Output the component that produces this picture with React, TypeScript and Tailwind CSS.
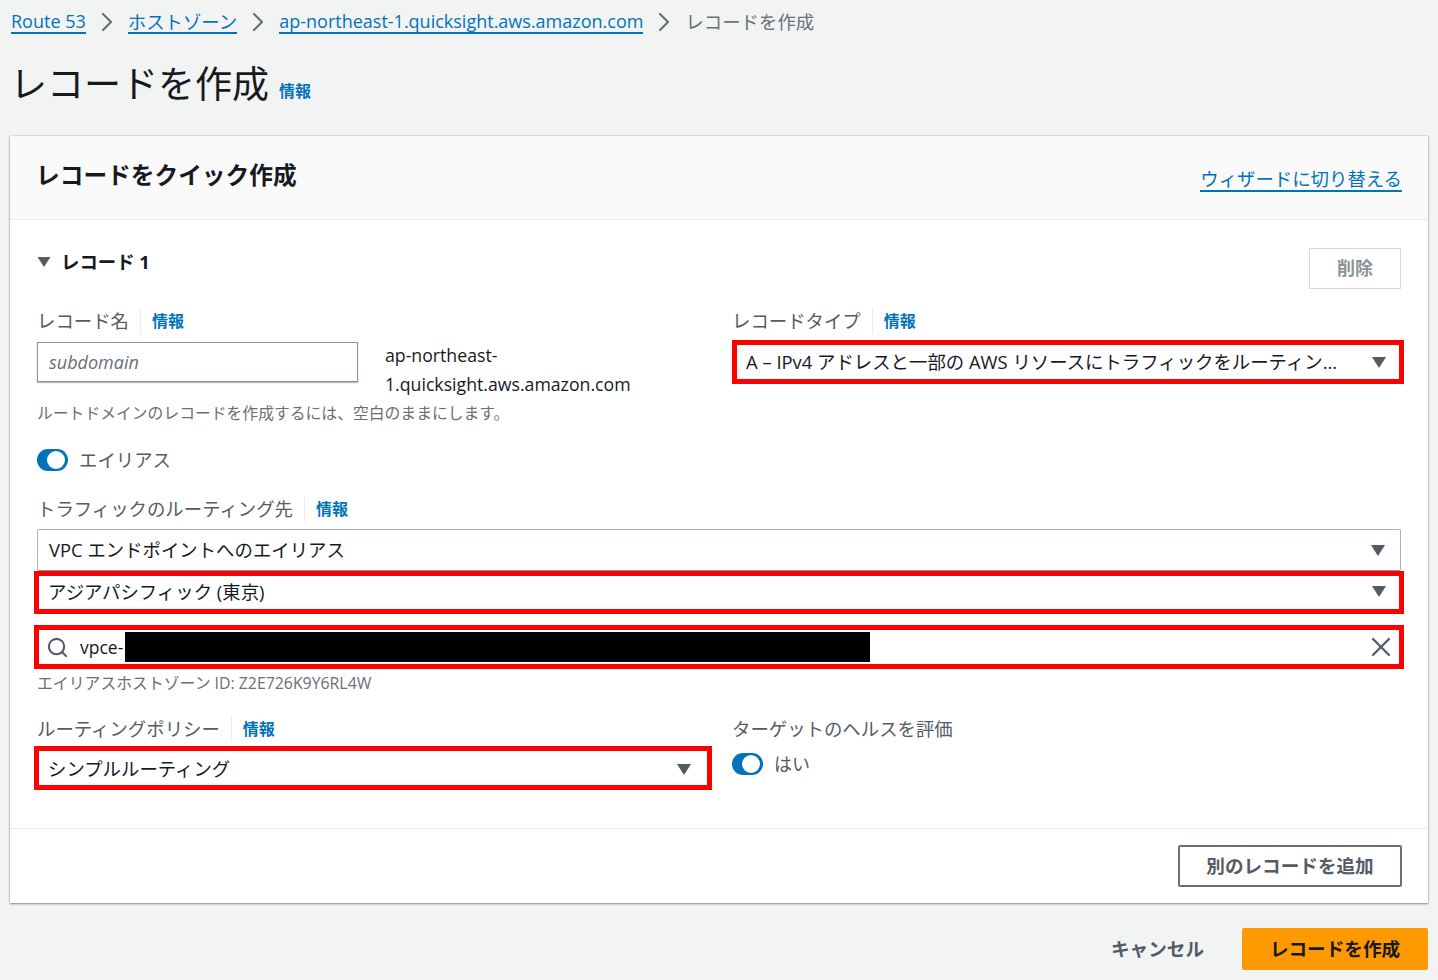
import React from 'react';
import { ChevronRight, Search, X } from 'lucide-react';

const Info = () => <a className="text-[16px] leading-[26px] font-bold text-[#0073bb]">情報</a>;

const FieldLabel = ({ text, className = '' }: { text: string; className?: string }) => (
    <div className={`flex items-center h-[26px] ${className}`}>
        <span className="text-[18.4px] leading-[26px] text-[#545b64]">{text}</span>
        <span className="h-[26px] border-l border-[#eaeded] ml-[11px] mr-[11px]" />
        <Info />
    </div>
);

const Caret = ({ className }: { className: string }) => (
    <svg viewBox="0 0 14 12" className={className}>
        <polygon points="0.5,1 13.5,1 7,11" fill="#545b64" />
    </svg>
);

const Crumb = ({ text, className = '' }: { text: string; className?: string }) => (
    <a className={`text-[#0073bb] border-b-2 border-[#0073bb] leading-[21px] h-[23px] ${className}`}>{text}</a>
);

const Chevron = () => (
    <ChevronRight size={32} strokeWidth={1.6} className="text-[#687078] mx-[5px] -mt-[5px] shrink-0" />
);

const Toggle = () => (
    <div className="w-[31px] h-[22px] rounded-full bg-[#0073bb] flex items-center justify-end pr-[3px]">
        <div className="w-[18px] h-[18px] rounded-full bg-white" />
    </div>
);

const RedSelect = ({ text, className }: { text: string; className: string }) => (
    <div className={`border-[5px] border-[#ff0000] bg-white flex items-center pl-[9px] text-[18.4px] text-[#16191f] ${className}`}>
        <span className="flex-1">{text}</span>
        <Caret className="w-[16px] h-[13px] shrink-0" />
    </div>
);

export default function App() {
    return (
        <div className="w-[1438px] h-[980px] overflow-hidden bg-[#f2f3f3] text-[#16191f] font-['Open_Sans','Noto_Sans_CJK_JP',sans-serif]">
            <nav className="flex items-start pl-[11px] pt-[11px] h-[45px] text-[18px]">
                <Crumb text="Route 53" />
                <Chevron />
                <Crumb text="ホストゾーン" className="text-[18.4px]" />
                <Chevron />
                <Crumb text="ap-northeast-1.quicksight.aws.amazon.com" />
                <Chevron />
                <span className="text-[#687078] text-[18.4px] leading-[21px]">レコードを作成</span>
            </nav>

            <div className="flex items-end pl-[10px] h-[91px] pb-[27px]">
                <h1 className="text-[37px] leading-[50px] text-[#16191f]">レコードを作成</h1>
                <span className="ml-[10px] mb-[5px]"><Info /></span>
            </div>

            <div className="ml-[10px] w-[1418px] h-[767px] bg-white shadow-[0_1px_2px_rgba(0,28,36,0.45),0_0_1px_rgba(0,28,36,0.4)]">
                <div className="h-[84px] bg-[#fafafa] border-b border-[#eaeded] flex justify-between pl-[26px] pr-[26px]">
                    <h2 className="text-[23.7px] leading-[34px] font-bold mt-[22px]">レコードをクイック作成</h2>
                    <a className="mt-[32px] h-[24px] text-[18.4px] leading-[22px] text-[#0073bb] border-b-2 border-[#0073bb]">ウィザードに切り替える</a>
                </div>

                <div className="px-[27px] h-[609px] border-b border-[#eaeded]">
                    <div className="flex justify-between h-[88px] pt-[28px]">
                        <div className="flex items-center h-[28px]">
                            <Caret className="w-[14px] h-[12px] mr-[10px]" />
                            <span className="text-[18.4px] font-bold">レコード 1</span>
                        </div>
                        <button className="w-[92px] h-[41px] border border-[#d5dbdb] text-[18px] font-bold text-[#879596]">削除</button>
                    </div>

                    <div className="grid grid-cols-[698px_666px]">
                        <div>
                            <FieldLabel text="レコード名" />
                            <div className="flex mt-[8px]">
                                <div className="w-[321px] h-[40px] border border-[#879596] shadow-[0_1px_1px_rgba(0,28,36,0.3)] flex items-center pl-[11px] text-[18px] italic text-[#687078]">subdomain</div>
                                <div className="ml-[27px] w-[290px] -mt-px text-[17.7px] leading-[29px] text-[#16191f]">ap-northeast-<br />1.quicksight.aws.amazon.com</div>
                            </div>
                        </div>
                        <div>
                            <FieldLabel text="レコードタイプ" className="-ml-[3px]" />
                            <RedSelect
                                className="mt-[6px] -ml-[3px] -mr-[3px] h-[44px] pr-[12px]"
                                text="A – IPv4 アドレスと一部の AWS リソースにトラフィックをルーティン..."
                            />
                        </div>
                    </div>

                    <p className="mt-[1px] h-[26px] text-[15.8px] leading-[26px] text-[#687078]">ルートドメインのレコードを作成するには、空白のままにします。</p>

                    <div className="flex items-center mt-[23px] h-[22px]">
                        <Toggle />
                        <span className="ml-[11px] text-[18.4px] text-[#545b64]">エイリアス</span>
                    </div>

                    <div className="mt-[25px]">
                        <FieldLabel text="トラフィックのルーティング先" />
                    </div>
                    <div className="mt-[7px] h-[42px] border border-[#aab7b8] border-b-[#879596] rounded-[2px] flex items-center pl-[11px] pr-[14px] text-[18.4px]">
                        <span className="flex-1">VPC エンドポイントへのエイリアス</span>
                        <Caret className="w-[16px] h-[13px]" />
                    </div>
                    <RedSelect className="-mx-[3px] h-[43px] pr-[12px] pb-[2px]" text="アジアパシフィック (東京)" />
                    <div className="-mx-[3px] mt-[11px] h-[44px] border-[5px] border-[#ff0000] bg-white flex items-center pl-[7px] text-[17.5px]">
                        <Search size={23} strokeWidth={2.2} className="text-[#545b64] shrink-0" />
                        <span className="ml-[11px] w-[45px] shrink-0 text-[#16191f]">vpce-</span>
                        <div className="w-[745px] h-[30px] bg-black" />
                        <div className="flex-1" />
                        <X size={32} strokeWidth={1.7} className="text-[#545b64] shrink-0 mr-[2px]" />
                    </div>
                    <p className="mt-[1px] h-[26px] text-[15.85px] leading-[26px] text-[#687078]">エイリアスホストゾーン ID: Z2E726K9Y6RL4W</p>

                    <div className="grid grid-cols-[698px_666px] mt-[20px]">
                        <div>
                            <FieldLabel text="ルーティングポリシー" />
                            <RedSelect className="mt-[4px] -ml-[3px] w-[678px] h-[44px] pr-[15px] pt-[2px]" text="シンプルルーティング" />
                        </div>
                        <div>
                            <div className="h-[26px] -ml-[3px] text-[18.4px] leading-[26px] text-[#545b64]">ターゲットのヘルスを評価</div>
                            <div className="flex items-center mt-[11px] h-[22px] -ml-[3px]">
                                <Toggle />
                                <span className="ml-[11px] text-[18px] text-[#545b64]">はい</span>
                            </div>
                        </div>
                    </div>
                </div>

                <div className="flex justify-end px-[26px] pt-[16px]">
                    <button className="w-[224px] h-[42px] border-2 border-[#687078] rounded-[2px] text-[18.6px] font-bold text-[#545b64]">別のレコードを追加</button>
                </div>
            </div>

            <div className="flex justify-end items-center w-[1428px] mt-[25px]">
                <button className="text-[18.6px] font-bold text-[#545b64] mr-[38px]">キャンセル</button>
                <button className="w-[186px] h-[42px] bg-[#ff9900] rounded-[2px] text-[18.6px] font-bold text-[#16191f]">レコードを作成</button>
            </div>
        </div>
    );
}
